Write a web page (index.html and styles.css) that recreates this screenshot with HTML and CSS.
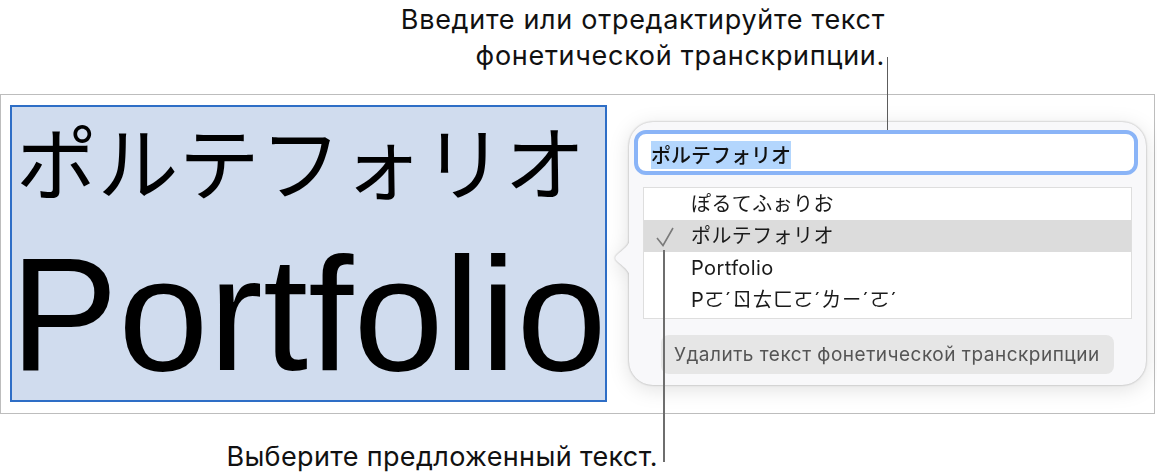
FILE: index.html
```html
<!DOCTYPE html>
<html lang="ru">
  <head>
    <meta charset="UTF-8" />
    <meta name="viewport" content="width=device-width, initial-scale=1.0" />
    <title>Фонетическая транскрипция</title>
    <link rel="stylesheet" href="styles.css">
  </head>

  <body>
    <div class="page">
      <div class="caption caption-top">
        Введите или отредактируйте текст<br />фонетической транскрипции.
      </div>

      <div class="frame">
        <div class="selection">
          <div class="big-jp">ポルテフォリオ</div>
          <div class="big-en">Portfolio</div>
        </div>

        <div class="popover">
          <svg class="popover-arrow" width="18" height="48" viewBox="0 0 18 48">
            <path d="M18 0 C18 10 12 14 6 19 C1 23 1 25 6 29 C12 34 18 38 18 48 Z" fill="#f8f8fa" />
          </svg>
          <div class="field">
            <span class="field-text">ポルテフォリオ</span>
          </div>
          <ul class="choices">
            <li>ぽるてふぉりお</li>
            <li class="checked">
              <svg class="check" width="18" height="20" viewBox="0 0 18 20">
                <path d="M1 11 L7 18.5 L17 1" fill="none" stroke="#7a7a7a" stroke-width="1.6" />
              </svg>
              ポルテフォリオ
            </li>
            <li>Portfolio</li>
            <li>Pㄛˊㄖㄊㄈㄛˊㄌㄧˊㄛˊ</li>
          </ul>
          <button class="remove">Удалить текст фонетической транскрипции</button>
        </div>
      </div>

      <div class="caption caption-bottom">Выберите предложенный текст.</div>

      <!-- callout lines -->
      <div class="leader leader-top"></div>
      <div class="leader leader-bottom"></div>
    </div>
  </body>
</html>
```

FILE: styles.css
```css
body {
  margin: 0;
  background: #ffffff;
  font-family: Inter, "Noto Sans", sans-serif;
  color: #111;
}

.page {
  position: relative;
  width: 1157px;
  height: 476px;
  overflow: hidden;
}

.caption {
  font-size: 27px;
  line-height: 36px;
  letter-spacing: 0.7px;
  text-align: right;
}

.caption-top {
  width: 885px;
  height: 94px;
  padding-top: 2px;
  box-sizing: border-box;
}

.caption-bottom {
  width: 658px;
  margin-top: 25px;
  letter-spacing: 0.35px;
}

.frame {
  display: flex;
  align-items: flex-start;
  width: 1155px;
  height: 320px;
  box-sizing: border-box;
  border: 1px solid #bdbdbd;
  padding: 10px 0 0 9px;
}

.selection {
  width: 597px;
  height: 297px;
  box-sizing: border-box;
  background: #d0dcee;
  border: 2px solid #2e6ec6;
  padding: 2px 0 0 4px;
}

.big-jp {
  font-family: "Noto Sans CJK JP", sans-serif;
  font-size: 81px;
  line-height: 100px;
  letter-spacing: 0.4px;
  color: #000;
}

.big-en {
  font-family: "Liberation Sans", Arial, sans-serif;
  font-size: 162px;
  line-height: 210px;
  letter-spacing: 0.3px;
  color: #000;
  margin-left: -6px;
}

.popover {
  position: relative;
  width: 517px;
  height: 263px;
  box-sizing: border-box;
  margin: 17px 0 0 22px;
  padding: 8px 8px 0 5px;
  background: #f8f8fa;
  border-radius: 24px;
  filter: drop-shadow(0 0 1px rgba(0, 0, 0, 0.3)) drop-shadow(0 4px 10px rgba(0, 0, 0, 0.12));
}

.popover-arrow {
  position: absolute;
  left: -16px;
  top: 112px;
}

.field {
  height: 45px;
  box-sizing: border-box;
  border: 4px solid #8ab4f7;
  border-radius: 12px;
  background: #fff;
  padding: 7px 0 0 13px;
}

.field-text {
  font-family: "Noto Sans CJK JP", sans-serif;
  font-size: 20px;
  font-weight: 500;
  line-height: 28px;
  background: #b3d6fd;
  display: inline-block;
}

.choices {
  list-style: none;
  margin: 12px 6px 0 9px;
  padding: 0 0 2px;
  background: #fff;
  border: 1px solid #dedede;
}

.choices li {
  position: relative;
  height: 32px;
  line-height: 32px;
  padding-left: 47px;
  font-family: Inter, "Noto Sans CJK JP", sans-serif;
  font-size: 20px;
  letter-spacing: 0.4px;
  color: #1a1a1a;
}

.choices li.checked {
  background: #dcdcdc;
}

.check {
  position: absolute;
  left: 12px;
  top: 7px;
}

.remove {
  display: block;
  width: 453px;
  height: 39px;
  margin: 16px 0 0 27px;
  padding: 0 0 0 13px;
  text-align: left;
  border: none;
  border-radius: 8px;
  background: #e6e6e6;
  color: #555;
  font-family: Inter, sans-serif;
  font-size: 19px;
  letter-spacing: 0.5px;
}

.leader {
  position: absolute;
  background: #5c5c5c;
  width: 1px;
}

.leader-top {
  left: 887px;
  top: 57px;
  height: 73px;
}

.leader-bottom {
  left: 663px;
  top: 250px;
  height: 212px;
  width: 2px;
  background: #6e6e6e;
}
```
